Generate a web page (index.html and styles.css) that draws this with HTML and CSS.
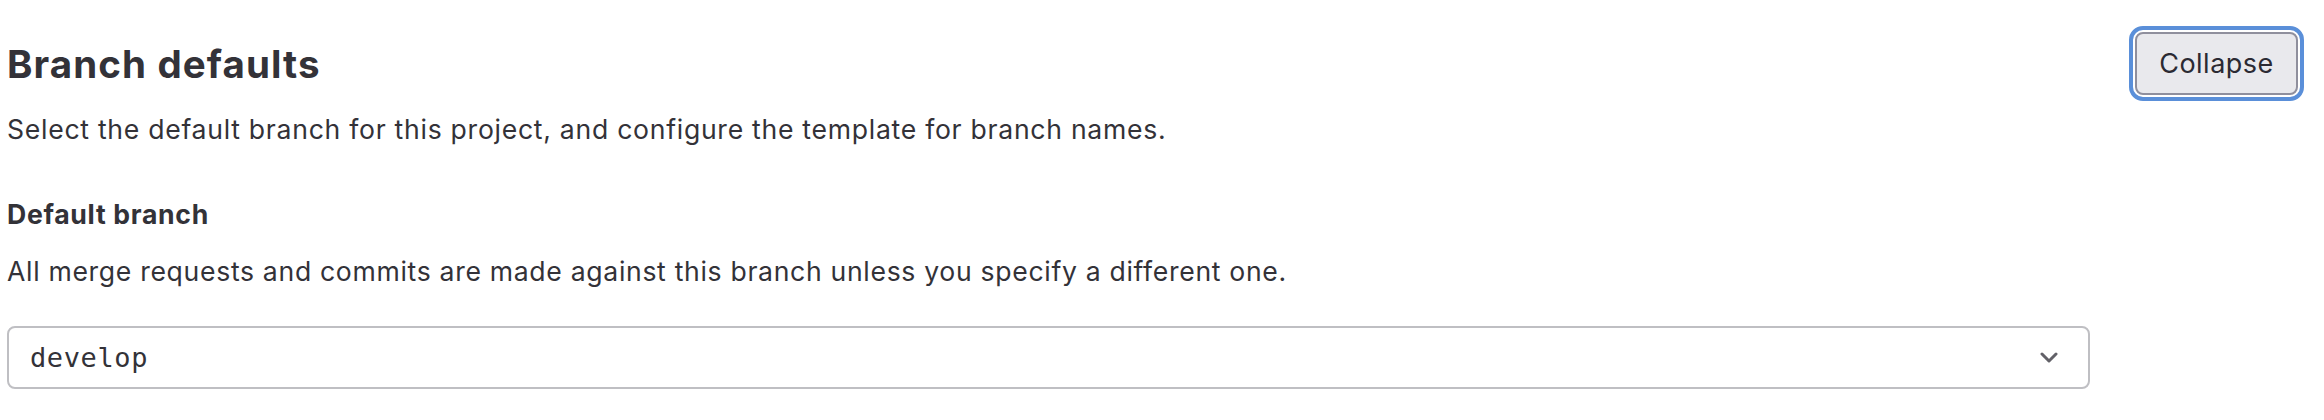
FILE: index.html
```html
<!DOCTYPE html>
<html lang="en">
<head>
  <meta charset="UTF-8">
  <title>Branch defaults</title>
  <link rel="stylesheet" href="styles.css">
</head>
<body>
  <section class="settings">
    <!-- Section header -->
    <div class="settings-header">
      <div class="settings-intro">
        <h2 class="settings-title">Branch defaults</h2>
        <p class="settings-desc">Select the default branch for this project, and configure the template for branch names.</p>
      </div>
      <button class="collapse-btn" type="button">Collapse</button>
    </div>

    <!-- Default branch -->
    <div class="form-group">
      <label class="form-label">Default branch</label>
      <p class="form-help">All merge requests and commits are made against this branch unless you specify a different one.</p>
      <div class="branch-select">
        <span class="branch-name">develop</span>
        <svg class="chevron" width="18" height="12" viewBox="0 0 18 12">
          <path d="M2 2 L9 9 L16 2" fill="none" stroke="#626168" stroke-width="3" stroke-linecap="round" stroke-linejoin="round"/>
        </svg>
      </div>
    </div>
  </section>
</body>
</html>
```

FILE: styles.css
```css
/* General */
body {
  margin: 0;
  padding: 0;
  background: #fff;
  color: #333238;
  font-family: Inter, "Noto Sans", sans-serif;
}

.settings {
  padding: 0 26px 0 7px;
}

/* Header */
.settings-header {
  display: flex;
  justify-content: space-between;
  align-items: flex-start;
}

.settings-title {
  margin: 40px 0 0;
  font-size: 38.5px;
  line-height: 48px;
  font-weight: 700;
  letter-spacing: 1.1px;
}

.settings-desc {
  margin: 21px 0 0;
  font-size: 26.6px;
  line-height: 40px;
  letter-spacing: 0.72px;
}

.collapse-btn {
  margin-top: 32px;
  width: 163px;
  height: 63px;
  background: #e9e9ed;
  border: 2px solid #8f8f9d;
  border-radius: 8px;
  outline: 4px solid #5a8fd9;
  outline-offset: 2px;
  color: #2b2a33;
  font-family: Inter, "Noto Sans", sans-serif;
  font-size: 27px;
  letter-spacing: 0.5px;
  padding: 0;
}

/* Form */
.form-group {
  margin-top: 45px;
}

.form-label {
  display: block;
  font-size: 26.6px;
  line-height: 40px;
  font-weight: 700;
  letter-spacing: 0.7px;
}

.form-help {
  margin: 17px 0 0;
  font-size: 26.6px;
  line-height: 40px;
  letter-spacing: 0.68px;
}

.branch-select {
  box-sizing: border-box;
  width: 2083px;
  height: 63px;
  margin-top: 35px;
  padding: 0 30px 0 21px;
  display: flex;
  align-items: center;
  justify-content: space-between;
  border: 2px solid #bfbfc3;
  border-radius: 8px;
}

.branch-name {
  font-family: "DejaVu Sans Mono", "Liberation Mono", monospace;
  font-size: 27px;
  letter-spacing: 0.6px;
  color: #333238;
}

.chevron {
  display: block;
}
```
